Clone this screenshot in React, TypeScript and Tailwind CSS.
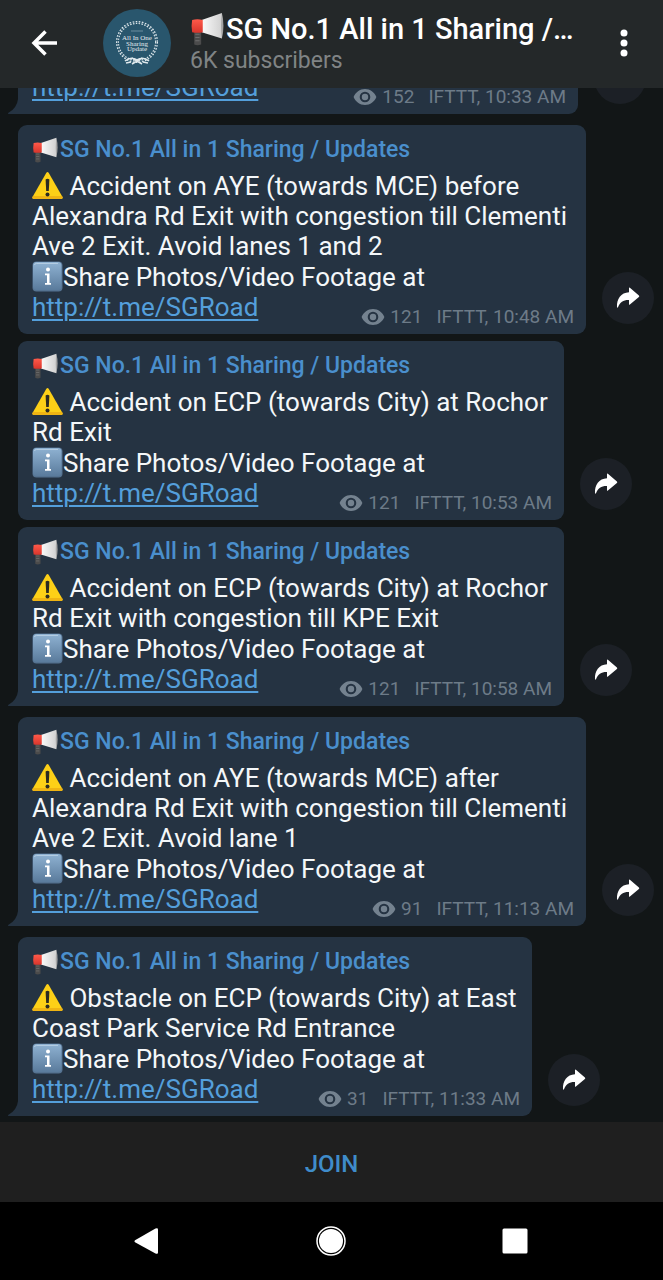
interface Message {
  views: number;
  time: string;
  text?: string;
  width: string;
  lastInGroup: boolean;
}

const LINK = "http://t.me/SGRoad";

const messages: Message[] = [
  {
    views: 152,
    time: "10:33 AM",
    width: "max-w-[560px]",
    lastInGroup: true,
  },
  {
    views: 121,
    time: "10:48 AM",
    text: "Accident on AYE (towards MCE) before Alexandra Rd Exit with congestion till Clementi Ave 2 Exit. Avoid lanes 1 and 2",
    width: "max-w-[568px]",
    lastInGroup: false,
  },
  {
    views: 121,
    time: "10:53 AM",
    text: "Accident on ECP (towards City) at Rochor Rd Exit",
    width: "max-w-[546px]",
    lastInGroup: false,
  },
  {
    views: 121,
    time: "10:58 AM",
    text: "Accident on ECP (towards City) at Rochor Rd Exit with congestion till KPE Exit",
    width: "max-w-[546px]",
    lastInGroup: true,
  },
  {
    views: 91,
    time: "11:13 AM",
    text: "Accident on AYE (towards MCE) after Alexandra Rd Exit with congestion till Clementi Ave 2 Exit. Avoid lane 1",
    width: "max-w-[568px]",
    lastInGroup: true,
  },
  {
    views: 31,
    time: "11:33 AM",
    text: "Obstacle on ECP (towards City) at East Coast Park Service Rd Entrance",
    width: "max-w-[514px]",
    lastInGroup: true,
  },
];

function Megaphone({ className }: { className: string }) {
  return (
    <svg viewBox="0 0 32 32" className={className} aria-hidden="true">
      <defs>
        <linearGradient id="horn" x1="0" y1="0" x2="1" y2="0">
          <stop offset="0" stopColor="#fafafa" />
          <stop offset="1" stopColor="#cfcfcf" />
        </linearGradient>
        <linearGradient id="cap" x1="0" y1="0" x2="0" y2="1">
          <stop offset="0" stopColor="#ff5a4a" />
          <stop offset="1" stopColor="#d8352c" />
        </linearGradient>
      </defs>
      <path d="M4 18h6.500v12.500q-3.500 1.500-6.500 0z" fill="#4b4b4b" />
      <path d="M5 21h4M5 24h4M5 27h4" stroke="#6d6d6d" strokeWidth="1" />
      <path d="M11 7.500 30 1q1.500 12 0 24L11 19z" fill="url(#horn)" />
      <path d="M30 1q3 12 0 24q-1.500-12 0-24z" fill="#a5a5a5" />
      <path d="M2 7.500q5-1.500 10 0v11.500q-5 1-10 0q-1-6 0-11.500z" fill="url(#cap)" />
    </svg>
  );
}

function Warning() {
  return (
    <svg viewBox="0 0 31 31" className="inline-block size-[31px] align-bottom" aria-hidden="true">
      <path d="M14.200 3q1.300-2 2.600 0L30.500 27q.7 1.800-1.200 2H1.700q-1.900-.2-1.200-2z" fill="#fdd017" />
      <path d="M1.700 29h27.600q1.900-.2 1.200-2l-.5-.9H1l-.5.9q-.7 1.800 1.200 2z" fill="#efb413" />
      <path d="M13.600 9.500q1.900-1.400 3.800 0L16.800 21h-2.600z" fill="#2b2a22" />
      <circle cx="15.500" cy="24.500" r="2" fill="#2b2a22" />
    </svg>
  );
}

function Info() {
  return (
    <svg viewBox="0 0 31 31" className="inline-block size-[31px] align-bottom" aria-hidden="true">
      <defs>
        <linearGradient id="info" x1="0" y1="0" x2="0" y2="1">
          <stop offset="0" stopColor="#8fb2d2" />
          <stop offset="1" stopColor="#5a7b9c" />
        </linearGradient>
      </defs>
      <rect x=".5" y=".5" width="30" height="30" rx="4" fill="#557391" />
      <rect x="1" y="1" width="28.500" height="28" rx="3.500" fill="url(#info)" />
      <path d="M2.500 4q0-1.500 2-1.500H26" stroke="#b3cce2" strokeWidth="1" fill="none" />
      <circle cx="16" cy="8.500" r="2" fill="#fff" />
      <path d="M13 12.500h4.500V22h1.500v1.800h-6V22h2v-7.700h-2z" fill="#fff" />
    </svg>
  );
}

function Eye() {
  return (
    <svg viewBox="0 0 24 18" className="h-[18px] w-6" aria-hidden="true">
      <path
        fillRule="evenodd"
        fill="#74828f"
        d="M12 1C6.800 1 2.500 4.300.6 9c1.900 4.700 6.200 8 11.400 8s9.500-3.300 11.400-8C21.500 4.300 17.200 1 12 1zm0 13.300A5.300 5.300 0 1 1 12 3.700a5.300 5.300 0 0 1 0 10.600zM12 5.800a3.200 3.200 0 1 0 0 6.400 3.200 3.200 0 0 0 0-6.400z"
      />
    </svg>
  );
}

function Tail() {
  return (
    <svg viewBox="0 0 12 20" className="absolute bottom-0 -left-[10px] h-5 w-3" aria-hidden="true">
      <path d="M10 0h2v20H.5q-1-.6 0-1.200Q9 14 10 5z" fill="#253342" />
    </svg>
  );
}

function Avatar() {
  return (
    <svg viewBox="0 0 68 68" className="size-[68px] shrink-0" role="img" aria-label="Channel photo">
      <circle cx="34" cy="34" r="34" fill="#29566d" />
      <circle cx="34" cy="33" r="19.500" fill="none" stroke="#dfe8ec" strokeWidth="3" strokeDasharray="1.600 1.400" />
      <circle cx="34" cy="33" r="19.500" fill="none" stroke="#29566d" strokeWidth="0.600" />
      <path
        d="M22 52q6-5 12-1q6-4 12 1M23 54l5-1M45 54l-5-1M29 49l10 6M39 49l-10 6"
        fill="none"
        stroke="#dfe8ec"
        strokeWidth="1.600"
      />
      <path d="M28 22h12" stroke="#7e9dac" strokeWidth="0.800" />
      <g fill="#e3ebee" fontSize="7" textAnchor="middle" className="font-['Liberation_Serif',serif]">
        <text x="34" y="31">All In One</text>
        <text x="34" y="36.500">Sharing</text>
        <text x="34" y="42">Update</text>
      </g>
    </svg>
  );
}

function MessageRow({ message }: { message: Message }) {
  const { views, time, text, width, lastInGroup } = message;

  return (
    <li className={`flex items-end gap-4 pl-[18px] ${lastInGroup ? "mb-[11px]" : "mb-[7px]"} last:mb-0`}>
      <article
        className={`relative w-full ${width} rounded-t-[9px] rounded-br-[9px] bg-[#253342] pt-3 pr-3 pb-[5px] pl-[14px] ${
          lastInGroup ? "" : "rounded-bl-[9px]"
        }`}
      >
        {lastInGroup && <Tail />}
        {text && (
          <>
            <h2 className="mb-[7px] flex h-[26px] items-center gap-0.5 text-[23px] leading-[26px] font-medium text-[#4a8fcd]">
              <Megaphone className="size-[26px] shrink-0" />
              SG No.1 All in 1 Sharing / Updates
            </h2>
            <p className="text-[26px] leading-[30px] text-[#f4f7f9]">
              <Warning /> {text}
            </p>
            <p className="text-[26px] leading-[30px] text-[#f4f7f9]">
              <Info />
              Share Photos/Video Footage at
            </p>
          </>
        )}
        <div className="flex items-end justify-between">
          <a
            href={LINK}
            className="mb-[7px] text-[26px] leading-[30px] text-[#549fdb] underline decoration-2 underline-offset-3"
          >
            {LINK}
          </a>
          <div className="flex items-center text-[19px] leading-[24px] text-[#6d7b88]">
            <Eye />
            <span className="ml-[5px]">{views}</span>
            <span className="ml-[14px]">IFTTT, {time}</span>
          </div>
        </div>
      </article>
      <button
        aria-label="Share"
        className="mb-[10px] flex size-[52px] shrink-0 items-center justify-center rounded-full bg-[#1c2026]"
      >
        <svg viewBox="0 0 24 22" className="h-[22px] w-6" aria-hidden="true">
          <path
            d="M13 1.200q0-1 .9-.4l9 7.700q.8.700 0 1.400l-9 7.700q-.9.600-.9-.4V13C7.500 12.800 4 15 2 20.300q-.6.900-1 0C.5 12 5 5.600 13 5.200z"
            fill="#fff"
          />
        </svg>
      </button>
    </li>
  );
}

export default function App() {
  return (
    <div className="flex h-screen flex-col bg-[#121617] font-[Roboto,sans-serif]">
      <header className="z-10 flex h-[88px] shrink-0 items-center bg-[#242829] pr-6 pb-0.5 pl-7">
        <button aria-label="Back" className="mr-[43px]">
          <svg viewBox="0 0 32 32" className="size-8" fill="none" stroke="#fff" strokeWidth="3.500" aria-hidden="true">
            <path d="M29 16H6M17.500 4.500 6 16l11.500 11.500" />
          </svg>
        </button>
        <Avatar />
        <div className="ml-[19px] min-w-0 flex-1 pt-0.5">
          <h1 className="flex items-center gap-0.5 text-[29px] leading-[34px] font-medium whitespace-nowrap text-white">
            <Megaphone className="size-[34px] shrink-0" />
            SG No.1 All in 1 Sharing /…
          </h1>
          <p className="text-[23px] leading-[30px] text-[#808485]">6K subscribers</p>
        </div>
        <button aria-label="More options">
          <svg viewBox="0 0 30 30" className="size-[30px]" fill="#fff" aria-hidden="true">
            <circle cx="15" cy="5" r="3.500" />
            <circle cx="15" cy="15" r="3.500" />
            <circle cx="15" cy="25" r="3.500" />
          </svg>
        </button>
      </header>

      <main className="flex min-h-0 flex-1 flex-col justify-end overflow-hidden pb-1.5">
        <ul>
          {messages.map((m) => (
            <MessageRow key={m.time} message={m} />
          ))}
        </ul>
      </main>

      <button className="h-20 shrink-0 bg-[#1f1f1f] pt-1 text-[24px] font-medium text-[#3f8cca]">JOIN</button>

      {/* System navigation */}
      <nav className="flex h-[78px] shrink-0 items-center justify-between bg-black pr-[132px] pl-[130px]">
        <button aria-label="System back">
          <svg viewBox="0 0 32 32" className="size-8" aria-hidden="true">
            <path d="M5 17.200q-1.300-1 0-2L25.500 3.500q2.500-1 2.500 1v23q0 2-2.500 1z" fill="#fff" />
          </svg>
        </button>
        <button aria-label="Home">
          <svg viewBox="0 0 32 32" className="size-8" aria-hidden="true">
            <circle cx="16" cy="16" r="14" fill="none" stroke="#fff" strokeWidth="1.500" />
            <circle cx="16" cy="16" r="12" fill="#fff" />
          </svg>
        </button>
        <button aria-label="Recent apps">
          <svg viewBox="0 0 32 32" className="size-8" aria-hidden="true">
            <rect x="3.500" y="3.500" width="25" height="25" rx="1.500" fill="#fff" />
          </svg>
        </button>
      </nav>
    </div>
  );
}
